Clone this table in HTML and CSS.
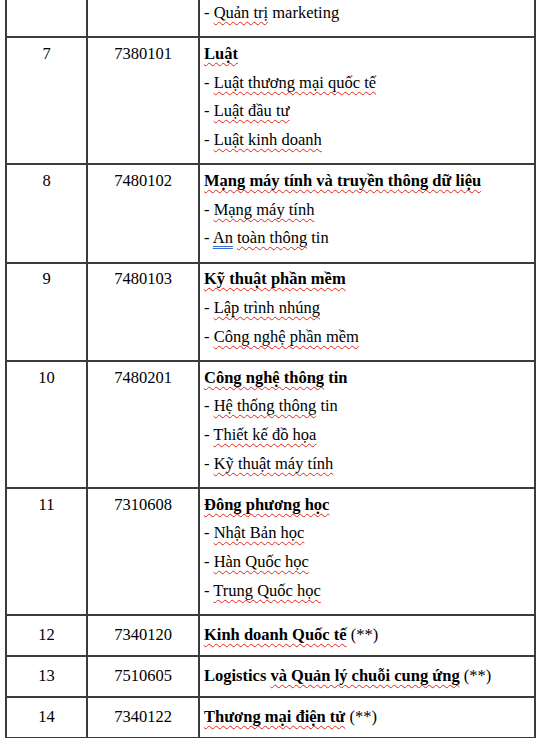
FILE: index.html
```html
<!DOCTYPE html>
<html lang="vi">
<head>
<meta charset="utf-8">
<title>Danh sách ngành</title>
<link rel="stylesheet" href="styles.css">
</head>
<body>
<div class="page">
<table class="majors">
  <colgroup>
    <col class="c-no">
    <col class="c-code">
    <col class="c-name">
  </colgroup>
  <tbody>
    <tr class="multi first">
      <td class="num"></td>
      <td class="num"></td>
      <td class="name"><div class="ln">- <span class="sp">Quản trị</span> marketing</div></td>
    </tr>
    <tr class="multi">
      <td class="num"><div class="ln">7</div></td>
      <td class="num"><div class="ln">7380101</div></td>
      <td class="name">
        <div class="ln"><b><span class="sp">Luật</span></b></div>
        <div class="ln">- <span class="sp">Luật thương mại quốc tế</span></div>
        <div class="ln">- <span class="sp">Luật đầu tư</span></div>
        <div class="ln">- <span class="sp">Luật kinh doanh</span></div>
      </td>
    </tr>
    <tr class="multi">
      <td class="num"><div class="ln">8</div></td>
      <td class="num"><div class="ln">7480102</div></td>
      <td class="name">
        <div class="ln"><b><span class="sp">Mạng máy tính và truyền thông dữ liệu</span></b></div>
        <div class="ln">- <span class="sp">Mạng máy tính</span></div>
        <div class="ln">- <span class="gr">An</span> <span class="sp">toàn thông</span> tin</div>
      </td>
    </tr>
    <tr class="multi">
      <td class="num"><div class="ln">9</div></td>
      <td class="num"><div class="ln">7480103</div></td>
      <td class="name">
        <div class="ln"><b><span class="sp">Kỹ thuật phần mềm</span></b></div>
        <div class="ln">- <span class="sp">Lập trình nhúng</span></div>
        <div class="ln">- <span class="sp">Công nghệ phần mềm</span></div>
      </td>
    </tr>
    <tr class="multi">
      <td class="num"><div class="ln">10</div></td>
      <td class="num"><div class="ln">7480201</div></td>
      <td class="name">
        <div class="ln"><b><span class="sp">Công nghệ thông</span> tin</b></div>
        <div class="ln">- <span class="sp">Hệ thống thông</span> tin</div>
        <div class="ln">- <span class="sp">Thiết kế đồ họa</span></div>
        <div class="ln">- <span class="sp">Kỹ thuật máy tính</span></div>
      </td>
    </tr>
    <tr class="multi">
      <td class="num"><div class="ln">11</div></td>
      <td class="num"><div class="ln">7310608</div></td>
      <td class="name">
        <div class="ln"><b><span class="sp">Đông phương học</span></b></div>
        <div class="ln">- <span class="sp">Nhật Bản học</span></div>
        <div class="ln">- <span class="sp">Hàn Quốc học</span></div>
        <div class="ln">- <span class="sp">Trung Quốc học</span></div>
      </td>
    </tr>
    <tr class="single">
      <td class="num"><div class="ln">12</div></td>
      <td class="num"><div class="ln">7340120</div></td>
      <td class="name"><div class="ln"><b><span class="sp">Kinh doanh Quốc tế</span></b> (**)</div></td>
    </tr>
    <tr class="single">
      <td class="num"><div class="ln">13</div></td>
      <td class="num"><div class="ln">7510605</div></td>
      <td class="name"><div class="ln"><b>Logistics <span class="sp">và Quản lý chuỗi cung ứng</span></b> (**)</div></td>
    </tr>
    <tr class="single">
      <td class="num"><div class="ln">14</div></td>
      <td class="num"><div class="ln">7340122</div></td>
      <td class="name"><div class="ln"><b><span class="sp">Thương mại điện tử</span></b> (**)</div></td>
    </tr>
  </tbody>
</table>
</div>
</body>
</html>
```
FILE: styles.css
```css
html, body {
  margin: 0;
  padding: 0;
  background: #ffffff;
}

.page {
  width: 540px;
  height: 738px;
  overflow: hidden;
}

.majors {
  border-collapse: collapse;
  table-layout: fixed;
  width: 529px;
  margin: -3px 0 0 5px;
  font-family: "Liberation Serif", "Times New Roman", serif;
  font-size: 16.5px;
  color: #000000;
}

.c-no { width: 81px; }
.c-code { width: 112px; }
.c-name { width: 336px; }

.majors td {
  border: 2px solid #3c3c3c;
  vertical-align: top;
  padding: 1.67px 4px 8.67px 4px;
}

.majors tr.first td {
  border-top: none;
  padding-top: 2px;
}

.majors tr.single td {
  padding-top: 5.17px;
  padding-bottom: 5.16px;
}

.majors td.num {
  text-align: center;
}

.ln {
  line-height: 28.67px;
  white-space: nowrap;
}

.sp {
  text-decoration: underline wavy #e3241b;
  text-decoration-thickness: 1px;
  text-underline-offset: 3px;
  text-decoration-skip-ink: none;
}

.gr {
  text-decoration: underline double #3b6fd6;
  text-decoration-thickness: 1px;
  text-underline-offset: 3px;
}
```
